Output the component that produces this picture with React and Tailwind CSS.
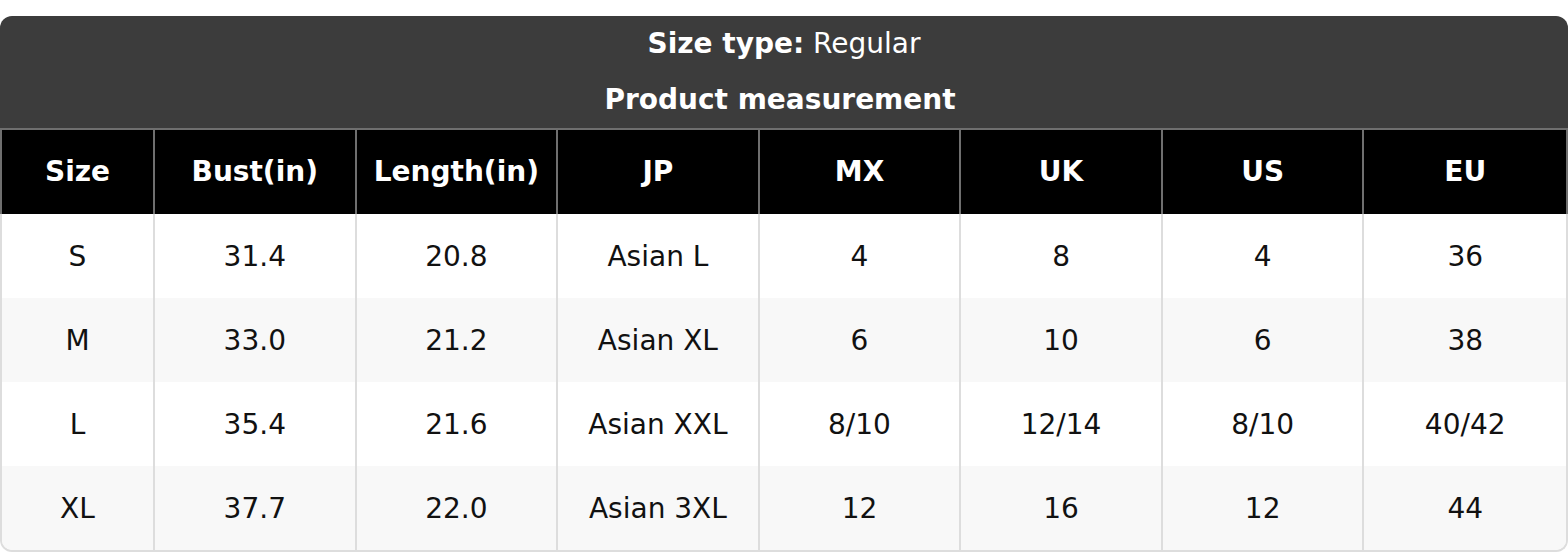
const headers = ["Size", "Bust(in)", "Length(in)", "JP", "MX", "UK", "US", "EU"];

const rows = [
  ["S", "31.4", "20.8", "Asian L", "4", "8", "4", "36"],
  ["M", "33.0", "21.2", "Asian XL", "6", "10", "6", "38"],
  ["L", "35.4", "21.6", "Asian XXL", "8/10", "12/14", "8/10", "40/42"],
  ["XL", "37.7", "22.0", "Asian 3XL", "12", "16", "12", "44"],
];

const cols = "grid grid-cols-[153px_repeat(7,minmax(0,1fr))]";

export default function App() {
  return (
    <div
      className="min-h-screen bg-white pt-4 text-[28px]"
      style={{ fontFamily: '"DejaVu Sans", Verdana, sans-serif' }}
    >
      {/* Title block */}
      <div className="rounded-t-xl bg-[#3c3c3c] text-center text-white">
        <div className="flex h-14 items-center justify-center">
          <span className="font-bold">Size type:</span>
          <span>&nbsp;Regular</span>
        </div>
        <div className="flex h-14 items-center justify-center pr-2 font-bold">
          Product measurement
        </div>
      </div>

      {/* Column headers */}
      <div
        className={`${cols} border-x-2 border-t-2 border-[#6f6f6f] bg-black font-bold text-white`}
      >
        {headers.map((h) => (
          <div
            key={h}
            className="flex h-[84px] items-center justify-center border-r-2 border-[#6f6f6f] last:border-r-0"
          >
            {h}
          </div>
        ))}
      </div>

      {/* Rows */}
      <div className="overflow-hidden rounded-b-xl border-x-2 border-b-2 border-[#dddddd] text-[#111111]">
        {rows.map((r, i) => (
          <div
            key={r[0]}
            className={`${cols} ${i % 2 === 1 ? "bg-[#f8f8f8]" : "bg-white"}`}
          >
            {r.map((c, j) => (
              <div
                key={j}
                className="flex h-[84px] items-center justify-center border-r-2 border-[#dddddd] pt-[2px] last:border-r-0"
              >
                {c}
              </div>
            ))}
          </div>
        ))}
      </div>
    </div>
  );
}
